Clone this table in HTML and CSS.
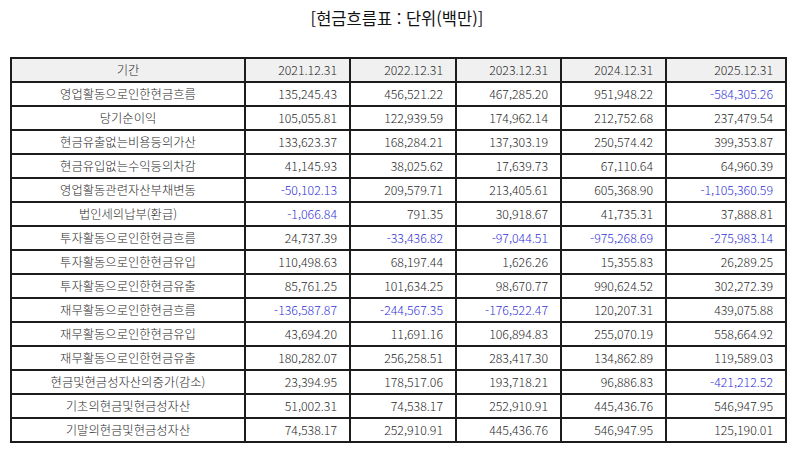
FILE: index.html
```html
<!DOCTYPE html>
<html lang="ko">
<head>
<meta charset="utf-8">
<link rel="stylesheet" href="styles.css">
</head>
<body>
<div class="page">
  <h1 class="title">[현금흐름표 : 단위(백만)]</h1>
  <table class="cf">
    <colgroup>
      <col class="c-label"><col class="c-num"><col class="c-num2"><col class="c-num"><col class="c-num"><col class="c-last">
    </colgroup>
    <thead>
      <tr><th class="label">기간</th><th>2021.12.31</th><th>2022.12.31</th><th>2023.12.31</th><th>2024.12.31</th><th>2025.12.31</th></tr>
    </thead>
    <tbody>
      <tr><td class="label">영업활동으로인한현금흐름</td><td>135,245.43</td><td>456,521.22</td><td>467,285.20</td><td>951,948.22</td><td class="neg">-584,305.26</td></tr>
      <tr><td class="label">당기순이익</td><td>105,055.81</td><td>122,939.59</td><td>174,962.14</td><td>212,752.68</td><td>237,479.54</td></tr>
      <tr><td class="label">현금유출없는비용등의가산</td><td>133,623.37</td><td>168,284.21</td><td>137,303.19</td><td>250,574.42</td><td>399,353.87</td></tr>
      <tr><td class="label">현금유입없는수익등의차감</td><td>41,145.93</td><td>38,025.62</td><td>17,639.73</td><td>67,110.64</td><td>64,960.39</td></tr>
      <tr><td class="label">영업활동관련자산부채변동</td><td class="neg">-50,102.13</td><td>209,579.71</td><td>213,405.61</td><td>605,368.90</td><td class="neg">-1,105,360.59</td></tr>
      <tr><td class="label">법인세의납부(환급)</td><td class="neg">-1,066.84</td><td>791.35</td><td>30,918.67</td><td>41,735.31</td><td>37,888.81</td></tr>
      <tr><td class="label">투자활동으로인한현금흐름</td><td>24,737.39</td><td class="neg">-33,436.82</td><td class="neg">-97,044.51</td><td class="neg">-975,268.69</td><td class="neg">-275,983.14</td></tr>
      <tr><td class="label">투자활동으로인한현금유입</td><td>110,498.63</td><td>68,197.44</td><td>1,626.26</td><td>15,355.83</td><td>26,289.25</td></tr>
      <tr><td class="label">투자활동으로인한현금유출</td><td>85,761.25</td><td>101,634.25</td><td>98,670.77</td><td>990,624.52</td><td>302,272.39</td></tr>
      <tr><td class="label">재무활동으로인한현금흐름</td><td class="neg">-136,587.87</td><td class="neg">-244,567.35</td><td class="neg">-176,522.47</td><td>120,207.31</td><td>439,075.88</td></tr>
      <tr><td class="label">재무활동으로인한현금유입</td><td>43,694.20</td><td>11,691.16</td><td>106,894.83</td><td>255,070.19</td><td>558,664.92</td></tr>
      <tr><td class="label">재무활동으로인한현금유출</td><td>180,282.07</td><td>256,258.51</td><td>283,417.30</td><td>134,862.89</td><td>119,589.03</td></tr>
      <tr><td class="label">현금및현금성자산의증가(감소)</td><td>23,394.95</td><td>178,517.06</td><td>193,718.21</td><td>96,886.83</td><td class="neg">-421,212.52</td></tr>
      <tr><td class="label">기초의현금및현금성자산</td><td>51,002.31</td><td>74,538.17</td><td>252,910.91</td><td>445,436.76</td><td>546,947.95</td></tr>
      <tr><td class="label">기말의현금및현금성자산</td><td>74,538.17</td><td>252,910.91</td><td>445,436.76</td><td>546,947.95</td><td>125,190.01</td></tr>
    </tbody>
  </table>
</div>
</body>
</html>
```

FILE: styles.css
```css
html, body {
  margin: 0;
  padding: 0;
  background: #ffffff;
}

.page {
  width: 794px;
  height: 452px;
  padding: 0 10px;
  box-sizing: border-box;
  font-family: "Noto Sans CJK KR", "Noto Sans", sans-serif;
  color: #2a2a2a;
}

.title {
  margin: 0;
  height: 57px;
  padding-top: 6px;
  box-sizing: border-box;
  text-align: center;
  font-size: 16.5px;
  font-weight: 400;
  line-height: 24px;
  color: #111111;
}

.cf {
  width: 775px;
  border-collapse: collapse;
  table-layout: fixed;
  font-size: 12.3px;
}

.c-label { width: 234px; }
.c-num { width: 105px; }
.c-num2 { width: 106px; }
.c-last { width: 120px; }

.cf th,
.cf td {
  height: 24px;
  padding: 0 12px 0 4px;
  border: 2px solid #1c1c1c;
  text-align: right;
  font-weight: 300;
  line-height: 15px;
  white-space: nowrap;
  box-sizing: border-box;
}

.cf thead th {
  background: #f0f0f0;
}

.cf .label {
  text-align: center;
  padding: 0 4px;
}

.cf .neg {
  color: #3333d6;
}
```
